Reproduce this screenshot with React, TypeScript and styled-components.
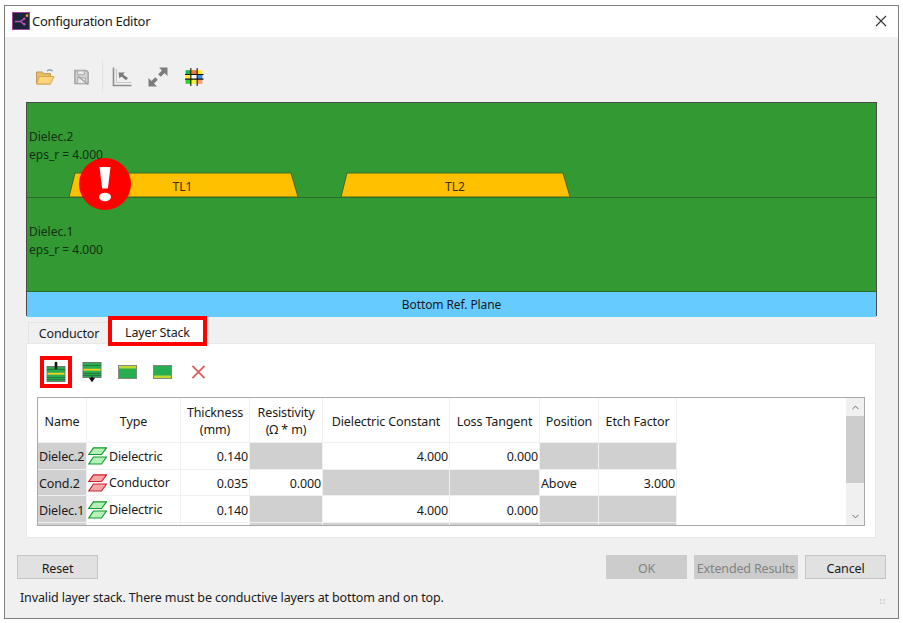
import React from 'react';
import styled, { createGlobalStyle } from 'styled-components';
import { ChevronDown, ChevronUp } from 'lucide-react';

const GlobalStyle = createGlobalStyle`
  html, body {
    margin: 0;
    padding: 0;
    background: #ffffff;
  }
  body {
    font-family: "Noto Sans", "Open Sans", "Liberation Sans", sans-serif;
    color: #1a1a1a;
  }
`;

const Page = styled.div`
  width: 903px;
  height: 623px;
  padding: 5px 4px 4px 4px;
  box-sizing: border-box;
  overflow: hidden;
`;

const Window = styled.div`
  width: 895px;
  height: 614px;
  box-sizing: border-box;
  border: 1px solid #7f7f7f;
  background: #f0f0f0;
  display: flex;
  flex-direction: column;
`;

const TitleBar = styled.div`
  height: 31px;
  flex: none;
  background: #ffffff;
  display: flex;
  align-items: center;
  padding: 0 11px 2px 7px;
  box-sizing: border-box;
  gap: 2px;
  font-size: 13px;
  letter-spacing: -0.3px;
`;

const TitleText = styled.span`
  flex: 1;
`;

const Main = styled.div`
  flex: 1;
  padding: 0 21px;
  display: flex;
  flex-direction: column;
`;

const ToolBar = styled.div`
  height: 65px;
  flex: none;
  display: flex;
  align-items: center;
  padding: 15px 0 0 1px;
  box-sizing: border-box;
`;

const ToolIcon = styled.span`
  width: 36px;
  height: 24px;
  display: flex;
  align-items: center;
  justify-content: center;
`;

const ToolSeparator = styled.span`
  width: 1px;
  height: 32px;
  background: #e2e2e2;
  margin: 0 1px 2px 3px;
`;

const Diagram = styled.div`
  position: relative;
  width: 851px;
  height: 214px;
  flex: none;
  box-sizing: border-box;
  border: 1px solid #4a4a4a;
  display: flex;
  flex-direction: column;
  font-size: 12px;
  color: #123012;
`;

const Dielectric = styled.div<{ $height: number }>`
  height: ${p => p.$height}px;
  flex: none;
  box-sizing: border-box;
  background: #339933;
  padding: 25px 0 0 2px;
  line-height: 17.5px;
  border-bottom: 1px solid #2b6b2b;
`;

const Plane = styled.div`
  flex: 1;
  background: #66ccff;
  color: #1a1a1a;
  text-align: center;
  line-height: 25px;
  letter-spacing: -0.1px;
`;

const Traces = styled.svg`
  position: absolute;
  left: 0;
  top: 0;
  pointer-events: none;
`;

const TabRow = styled.div`
  position: relative;
  height: 27px;
  flex: none;
  display: flex;
  align-items: flex-end;
  padding-left: 2px;
  font-size: 12.5px;
  letter-spacing: -0.15px;
`;

const Tab = styled.div<{ $active?: boolean; $width: number }>`
  width: ${p => p.$width}px;
  height: ${p => (p.$active ? 22 : 21)}px;
  box-sizing: border-box;
  display: flex;
  align-items: center;
  justify-content: center;
  padding-top: ${p => (p.$active ? 2 : 1)}px;
  background: ${p => (p.$active ? '#ffffff' : '#f0f0f0')};
  outline: ${p => (p.$active ? '4px solid #ff0000' : 'none')};
  margin-left: ${p => (p.$active ? 2 : 0)}px;
  margin-bottom: ${p => (p.$active ? 1 : 0)}px;
  border: ${p => (p.$active ? 'none' : '1px solid #e4e4e4')};
  border-bottom: none;
`;

const Panel = styled.div`
  width: 850px;
  height: 195px;
  flex: none;
  box-sizing: border-box;
  background: #ffffff;
  border: 1px solid #e8e8e8;
  padding: 12px 10px 0 10px;
`;

const StackTools = styled.div`
  height: 32px;
  display: flex;
  align-items: center;
  gap: 3.5px;
  padding-left: 3px;
  margin-bottom: 9px;
`;

const StackButton = styled.span<{ $flagged?: boolean }>`
  width: 32px;
  height: 32px;
  box-sizing: border-box;
  display: flex;
  align-items: center;
  justify-content: center;
  border: ${p => (p.$flagged ? '4px solid #ff0000' : 'none')};
`;

const TableFrame = styled.div`
  width: 828px;
  height: 129px;
  box-sizing: border-box;
  border: 1px solid #a9a9a9;
  display: flex;
  overflow: hidden;
`;

const TableArea = styled.div`
  flex: 1;
  overflow: hidden;
`;

const Grid = styled.table`
  border-collapse: separate;
  border-spacing: 0;
  table-layout: fixed;
  width: 639px;
  font-size: 12.5px;
  letter-spacing: -0.12px;
`;

const Head = styled.th`
  height: 45px;
  padding: 2px 2px 0 2px;
  box-sizing: border-box;
  font-weight: 400;
  text-align: center;
  line-height: 17px;
  background: #ffffff;
  border-right: 1px solid #f0f0f0;
  border-bottom: 1px solid #f0f0f0;
  white-space: nowrap;
`;

const Cell = styled.td<{ $off?: boolean; $align?: string }>`
  height: 26.67px;
  padding: 2px 1px 0 1px;
  box-sizing: border-box;
  text-align: ${p => p.$align || 'right'};
  background: ${p => (p.$off ? '#d0d0d0' : '#ffffff')};
  border-right: 1px solid #f0f0f0;
  border-bottom: 1px solid #f0f0f0;
  white-space: nowrap;
  overflow: hidden;
`;

const TypeLabel = styled.span`
  display: flex;
  align-items: center;
  gap: 2px;
  margin-top: -1px;
`;

const ScrollBar = styled.div`
  width: 18px;
  flex: none;
  background: #f0f0f0;
  display: flex;
  flex-direction: column;
`;

const ScrollArrow = styled.div`
  height: 18px;
  flex: none;
  display: flex;
  align-items: center;
  justify-content: center;
  color: #606060;
`;

const ScrollThumb = styled.div`
  height: 67px;
  flex: none;
  background: #cdcdcd;
`;

const ScrollTrack = styled.div`
  flex: 1;
`;

const ButtonRow = styled.div`
  height: 24px;
  flex: none;
  display: flex;
  gap: 7px;
  margin: 17px 12px 0 12px;
`;

const Button = styled.div<{ $disabled?: boolean; $width: number }>`
  width: ${p => p.$width}px;
  box-sizing: border-box;
  display: flex;
  align-items: center;
  justify-content: center;
  padding-top: 2px;
  font-size: 12.5px;
  letter-spacing: -0.15px;
  background: ${p => (p.$disabled ? '#cccccc' : '#e1e1e1')};
  color: ${p => (p.$disabled ? '#838383' : '#1a1a1a')};
  border: 1px solid ${p => (p.$disabled ? '#cccccc' : '#c4c4c4')};
`;

const Spacer = styled.div`
  flex: 1;
`;

const StatusBar = styled.div`
  position: relative;
  flex: none;
  height: 39px;
  padding: 10px 0 0 15px;
  box-sizing: border-box;
  font-size: 12.5px;
  letter-spacing: -0.135px;
`;

const Grip = styled.svg`
  position: absolute;
  right: 13px;
  bottom: 14px;
`;

const AppIcon = () => (
  <svg width="18" height="18" viewBox="0 0 19 19">
    <rect x="0.5" y="0.5" width="18" height="18" fill="#1d2338" stroke="#a2469c" />
    <path d="M3 10h6M9 10l4-3M9 10l4 3" stroke="#c04fb8" strokeWidth="1.5" fill="none" />
    <circle cx="13" cy="7" r="1.3" fill="#c04fb8" />
    <circle cx="13" cy="13" r="1.3" fill="#c04fb8" />
    <rect x="14.5" y="2.5" width="2.6" height="2.6" fill="#f0a020" />
  </svg>
);

const CloseIcon = () => (
  <svg width="12" height="12" viewBox="0 0 12 12">
    <path d="M1 1l10 10M11 1L1 11" stroke="#333" strokeWidth="1.1" />
  </svg>
);

const OpenIcon = () => (
  <svg width="20" height="18" viewBox="0 0 20 18">
    <path d="M1.5 4h6l1 1.5h7V16h-14z" fill="#e6bc68" stroke="#bf9a52" />
    <path d="M1.5 16L4.5 8.5h14.5l-3.5 7.5z" fill="#fdd67c" stroke="#d9a94f" />
    <path d="M12 3c2-1.5 4-1.2 5.5 0" stroke="#7f98aa" strokeWidth="1.3" fill="none" />
  </svg>
);

const SaveIcon = () => (
  <svg width="17" height="18" viewBox="0 0 18 18">
    <path d="M2 2h12l2 2v12H2z" fill="#d2d2d2" stroke="#a4a4a4" strokeWidth="1.6" />
    <path d="M5 2.5h7v4H5zM5 10h8v6H5z" fill="#ececec" stroke="#a8a8a8" />
    <path d="M5 8l11 9" stroke="#a0a0a0" strokeWidth="1.3" />
  </svg>
);

const AxesIcon = () => (
  <svg width="20" height="20" viewBox="0 0 20 20">
    <path d="M1.5 0.5v18H19.5" stroke="#8c8c8c" strokeWidth="1.6" fill="none" />
    <path d="M4.5 2v13.5h15" stroke="#c8c8c8" strokeWidth="1.2" fill="none" />
    <path d="M6.5 5.5h6.5l-2 2 5 3.5-2 2.2-4.6-3.6-2 2z" fill="#7a7a7a" />
  </svg>
);

const ExpandIcon = () => (
  <svg width="20" height="20" viewBox="0 0 19 19">
    <path d="M10.5 0.5h8v8l-2.8-2.8-3.6 3.6-2.4-2.4 3.6-3.6zM8.5 18.5h-8v-8l2.8 2.8 3.6-3.6 2.4 2.4-3.6 3.6z" fill="#7c7c7c" />
  </svg>
);

const ColorGridIcon = () => (
  <svg width="20" height="20" viewBox="0 0 19 19">
    <rect x="1.5" y="3" width="5.5" height="4.5" fill="#22b14c" />
    <rect x="7" y="3" width="5.5" height="4.5" fill="#f07830" />
    <rect x="12.5" y="3" width="5" height="4.5" fill="#ffee30" />
    <rect x="1.5" y="7.5" width="5.5" height="4" fill="#ffee30" />
    <rect x="7" y="7.5" width="5.5" height="4" fill="#ffffff" />
    <rect x="12.5" y="7.5" width="5" height="4" fill="#3f8ce0" />
    <rect x="1.5" y="11.5" width="5.5" height="4.5" fill="#30d030" />
    <rect x="7" y="11.5" width="5.5" height="4.5" fill="#ffee30" />
    <rect x="12.5" y="11.5" width="5" height="4.5" fill="#f4a070" />
    <path d="M6.5 1v17M12.5 1v17M1 7.2h17.5M1 11.5h17.5" stroke="#111" strokeWidth="1" />
  </svg>
);

const StackIcon = ({ variant }: { variant: 'insertAbove' | 'insertBelow' | 'top' | 'bottom' }) => {
  if (variant === 'top' || variant === 'bottom') {
    return (
      <svg width="19" height="14" viewBox="0 0 19 14">
        <rect x="0.5" y="0.5" width="18" height="13" fill="#27ae50" stroke="#7f8a80" />
        <rect x="1" y={variant === 'top' ? 1 : 10.5} width="17" height="2.5" fill="#c4d92e" />
      </svg>
    );
  }
  const above = variant === 'insertAbove';
  return (
    <svg width="20" height="22" viewBox="0 0 20 22">
      <g transform={above ? 'translate(0 5)' : 'translate(0 1)'}>
        <rect x="1" y="0.5" width="18" height="15" fill="#27ae50" stroke="#6f7a70" />
        <path d="M1 3.5h18M1 11.5h18M1 13.5h18" stroke="#1c6b36" strokeWidth="0.8" />
        <rect x="1.5" y="6.8" width="17" height="1.8" fill="#ffd21e" />
      </g>
      {above ? (
        <path d="M10 2v5" stroke="#111" strokeWidth="2.6" strokeLinecap="round" />
      ) : (
        <path d="M10 15.5v3M8.2 17.5h3.6L10 20z" stroke="#111" strokeWidth="1.4" />
      )}
    </svg>
  );
};

const DeleteIcon = () => (
  <svg width="15" height="14" viewBox="0 0 16 15">
    <path d="M1.5 1l13 13M14.5 1l-13 13" stroke="#d9605c" strokeWidth="2" />
  </svg>
);

const LayerIcon = ({ conductor }: { conductor?: boolean }) => {
  const fill = conductor ? '#f8a6a8' : '#b4f2b8';
  const stroke = conductor ? '#d0202e' : '#0f9a2a';
  return (
    <svg width="19" height="18" viewBox="0 0 19 18">
      <path d="M5.5 0.8h13l-5 6.7H0.8z" fill={fill} stroke={stroke} strokeWidth="1.2" />
      <path d="M5.5 10h13l-5 7H0.8z" fill={fill} stroke={stroke} strokeWidth="1.2" />
    </svg>
  );
};

type Layer = {
  name: string;
  conductor: boolean;
  thickness: string;
  resistivity?: string;
  constant?: string;
  tangent?: string;
  position?: string;
  etch?: string;
};

const layers: Layer[] = [
  { name: 'Dielec.2', conductor: false, thickness: '0.140', constant: '4.000', tangent: '0.000' },
  { name: 'Cond.2', conductor: true, thickness: '0.035', resistivity: '0.000', position: 'Above', etch: '3.000' },
  { name: 'Dielec.1', conductor: false, thickness: '0.140', constant: '4.000', tangent: '0.000' },
  { name: '', conductor: false, thickness: '' },
];

const columnWidths = [49, 94, 69, 73, 127, 90, 59, 78];

export default function App() {
  return (
    <Page>
      <GlobalStyle />
      <Window>
        <TitleBar>
          <AppIcon />
          <TitleText>Configuration Editor</TitleText>
          <CloseIcon />
        </TitleBar>
        <Main>
          <ToolBar>
            <ToolIcon><OpenIcon /></ToolIcon>
            <ToolIcon><SaveIcon /></ToolIcon>
            <ToolSeparator />
            <ToolIcon><AxesIcon /></ToolIcon>
            <ToolIcon><ExpandIcon /></ToolIcon>
            <ToolIcon><ColorGridIcon /></ToolIcon>
          </ToolBar>
          <Diagram>
            <Dielectric $height={95}>Dielec.2<br />eps_r = 4.000</Dielectric>
            <Dielectric $height={94}>Dielec.1<br />eps_r = 4.000</Dielectric>
            <Plane>Bottom Ref. Plane</Plane>
            <Traces width="849" height="212" viewBox="0 0 849 212">
              <g fontFamily="Noto Sans, sans-serif" fontSize="12" fill="#3a2c00" textAnchor="middle">
                <polygon points="42,94 271,94 264,70 48,70" fill="#ffc000" stroke="#3f6a22" />
                <text x="155.5" y="88">TL1</text>
                <polygon points="314,94 543,94 536,70 320,70" fill="#ffc000" stroke="#3f6a22" />
                <text x="428" y="88">TL2</text>
              </g>
              <circle cx="78" cy="81" r="26" fill="#ff0000" />
              <path d="M72.5 64h11l-2.6 21.5h-5.8z" fill="#ffffff" />
              <ellipse cx="78" cy="94" rx="6" ry="4.2" fill="#ffffff" />
            </Traces>
          </Diagram>
          <TabRow>
            <Tab $width={82}>Conductor</Tab>
            <Tab $active $width={91}>Layer Stack</Tab>
          </TabRow>
          <Panel>
            <StackTools>
              <StackButton $flagged><StackIcon variant="insertAbove" /></StackButton>
              <StackButton><StackIcon variant="insertBelow" /></StackButton>
              <StackButton><StackIcon variant="top" /></StackButton>
              <StackButton><StackIcon variant="bottom" /></StackButton>
              <StackButton><DeleteIcon /></StackButton>
            </StackTools>
            <TableFrame>
              <TableArea>
                <Grid>
                  <colgroup>
                    {columnWidths.map((w, i) => <col key={i} width={w} />)}
                  </colgroup>
                  <thead>
                    <tr>
                      <Head>Name</Head>
                      <Head>Type</Head>
                      <Head>Thickness<br />(mm)</Head>
                      <Head>Resistivity<br />(Ω * m)</Head>
                      <Head>Dielectric Constant</Head>
                      <Head>Loss Tangent</Head>
                      <Head>Position</Head>
                      <Head>Etch Factor</Head>
                    </tr>
                  </thead>
                  <tbody>
                    {layers.map((l, i) => (
                      <tr key={i}>
                        <Cell $off $align="left">{l.name}</Cell>
                        <Cell $align="left">
                          {l.name && (
                            <TypeLabel>
                              <LayerIcon conductor={l.conductor} />
                              {l.conductor ? 'Conductor' : 'Dielectric'}
                            </TypeLabel>
                          )}
                        </Cell>
                        <Cell>{l.thickness}</Cell>
                        <Cell $off={!l.resistivity}>{l.resistivity}</Cell>
                        <Cell $off={!l.constant}>{l.constant}</Cell>
                        <Cell $off={!l.tangent}>{l.tangent}</Cell>
                        <Cell $off={!l.position} $align="left">{l.position}</Cell>
                        <Cell $off={!l.etch}>{l.etch}</Cell>
                      </tr>
                    ))}
                  </tbody>
                </Grid>
              </TableArea>
              <ScrollBar>
                <ScrollArrow><ChevronUp size={11} strokeWidth={2} /></ScrollArrow>
                <ScrollThumb />
                <ScrollTrack />
                <ScrollArrow><ChevronDown size={11} strokeWidth={2} /></ScrollArrow>
              </ScrollBar>
            </TableFrame>
          </Panel>
        </Main>
        <ButtonRow>
          <Button $width={81}>Reset</Button>
          <Spacer />
          <Button $disabled $width={81}>OK</Button>
          <Button $disabled $width={104}>Extended Results</Button>
          <Button $width={81}>Cancel</Button>
        </ButtonRow>
        <StatusBar>
          Invalid layer stack. There must be conductive layers at bottom and on top.
          <Grip width="5" height="5" viewBox="0 0 6 6">
            <path d="M0 0h2v2H0zM4 0h2v2H4zM0 4h2v2H0zM4 4h2v2H4z" fill="#d0d0d0" />
          </Grip>
        </StatusBar>
      </Window>
    </Page>
  );
}
